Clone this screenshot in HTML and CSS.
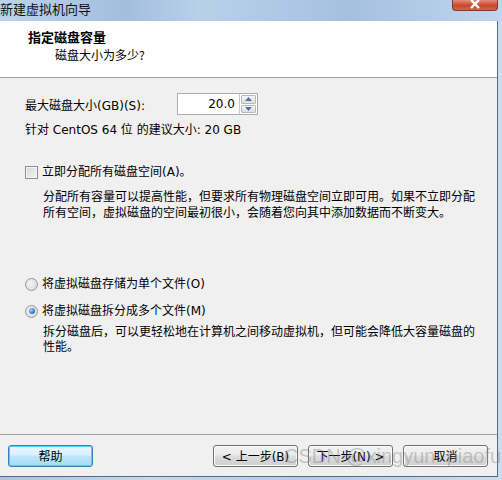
FILE: index.html
```html
<!DOCTYPE html>
<html>
<head>
    <meta charset="utf-8">
    <title>新建虚拟机向导</title>
    <link rel="stylesheet" href="styles.css">
</head>
<body>
    <div class="frame">
        <div class="titlebar">
            <span class="title">新建虚拟机向导</span>
            <div class="close">
                <svg width="14" height="9" viewBox="0 0 14 9"><path d="M3 0 L11 8 M11 0 L3 8" stroke="#fff" stroke-width="2.4"/></svg>
            </div>
        </div>

        <div class="window">
            <div class="header">
                <div class="head-title">指定磁盘容量</div>
                <div class="head-sub">磁盘大小为多少?</div>
            </div>

            <div class="content">
                <div class="size-row">
                    <span>最大磁盘大小(GB)(S):</span>
                    <div class="spin">
                        <div class="spin-input">20.0</div>
                        <div class="spin-btns">
                            <div class="spin-btn"><svg width="7" height="4" viewBox="0 0 7 4"><path d="M0 4 L3.5 0 L7 4 Z" fill="#4d6fb0"/></svg></div>
                            <div class="spin-btn"><svg width="7" height="4" viewBox="0 0 7 4"><path d="M0 0 L3.5 4 L7 0 Z" fill="#4d6fb0"/></svg></div>
                        </div>
                    </div>
                </div>
                <div class="hint">针对 CentOS 64 位 的建议大小: 20 GB</div>

                <div class="option opt-check">
                    <span class="checkbox"></span>
                    <span>立即分配所有磁盘空间(A)。</span>
                </div>
                <p class="note note-first">分配所有容量可以提高性能，但要求所有物理磁盘空间立即可用。如果不立即分配所有空间，虚拟磁盘的空间最初很小，会随着您向其中添加数据而不断变大。</p>

                <div class="option opt-radio1">
                    <span class="radio"></span>
                    <span>将虚拟磁盘存储为单个文件(O)</span>
                </div>
                <div class="option opt-radio2">
                    <span class="radio checked"></span>
                    <span>将虚拟磁盘拆分成多个文件(M)</span>
                </div>
                <p class="note">拆分磁盘后，可以更轻松地在计算机之间移动虚拟机，但可能会降低大容量磁盘的性能。</p>
            </div>

            <div class="footer">
                <button class="btn default">帮助</button>
                <div class="nav">
                    <button class="btn">&lt; 上一步(B)</button>
                    <button class="btn">下一步(N) &gt;</button>
                    <button class="btn">取消</button>
                </div>
                <div class="watermark">CSDN @xingyun_piaofu</div>
            </div>
        </div>
    </div>
</body>
</html>
```

FILE: styles.css
```css
body {
    margin: 0;
    width: 502px;
    height: 480px;
    overflow: hidden;
    font-family: "DejaVu Sans", "Noto Sans CJK SC", sans-serif;
    font-size: 12px;
    color: #000;
}
.frame {
    height: 480px;
    background: linear-gradient(90deg, #a9c4e3 0%, #c5d9ef 30%, #b4cce8 60%, #c9dcf1 100%);
    display: flex;
    flex-direction: column;
}
.titlebar {
    height: 21px;
    display: flex;
    justify-content: space-between;
    align-items: flex-start;
    background: linear-gradient(90deg, #bcd3ec 0%, #a3bedd 25%, #b9d0ea 40%, #a5c0df 70%, #c0d6ee 100%);
}
.title {
    font-family: "Noto Sans CJK SC", sans-serif;
    font-size: 13px;
    line-height: 17px;
    color: #111;
}
.close {
    width: 44px;
    height: 11px;
    margin-right: 4px;
    margin-top: -1px;
    border: 1px solid #7a3a2e;
    border-top: none;
    border-radius: 0 0 4px 4px;
    background: linear-gradient(#e89a8a, #c9462d 60%, #d8654a);
    display: flex;
    align-items: center;
    justify-content: center;
}
.window {
    flex: 1;
    margin-right: 4px;
    margin-bottom: 3px;
    border-right: 1px solid #5a6a7a;
    border-bottom: 1px solid #5a6a7a;
    background: #f0f0f0;
    display: flex;
    flex-direction: column;
    position: relative;
}
.header {
    height: 56px;
    background: #fff;
    border-bottom: 1px solid #a0a0a0;
    font-family: "Noto Sans CJK SC", sans-serif;
}
.head-title {
    font-size: 13px;
    font-weight: bold;
    line-height: 16px;
    padding: 8px 0 0 28px;
}
.head-sub {
    line-height: 16px;
    padding: 2px 0 0 55px;
}
.content {
    flex: 1;
    padding-left: 25px;
    border-bottom: 1px solid #a0a0a0;
}
.size-row {
    display: flex;
    align-items: center;
    margin-top: 15px;
    height: 22px;
}
.spin {
    display: flex;
    margin-left: 32px;
    border: 1px solid #abadb3;
    background: #fff;
    height: 20px;
}
.spin-input {
    width: 57px;
    text-align: right;
    padding-right: 4px;
    line-height: 20px;
}
.spin-btns {
    display: flex;
    flex-direction: column;
    gap: 1px;
    padding: 1px;
    background: #fff;
    border-left: 1px solid #c8c8c8;
}
.spin-btn {
    width: 13px;
    height: 8px;
    border: 1px solid #b8b8b8;
    border-radius: 1px;
    background: linear-gradient(#f6f6f6, #dedede);
    display: flex;
    align-items: center;
    justify-content: center;
}
.hint {
    margin-top: 7px;
    line-height: 16px;
}
.option {
    display: flex;
    align-items: center;
    gap: 4px;
    line-height: 16px;
}
.opt-check { margin-top: 26px; }
.opt-radio1 { margin-top: 56px; }
.opt-radio2 { margin-top: 11px; }
.checkbox {
    width: 11px;
    height: 11px;
    border: 1px solid #8f8f8f;
    background: linear-gradient(135deg, #d8d8d8, #f4f4f4);
    box-shadow: inset 0 0 0 1px #f4f4f4;
}
.radio {
    width: 11px;
    height: 11px;
    border: 1px solid #979797;
    border-radius: 50%;
    background: radial-gradient(circle at 40% 40%, #f4f4f4, #d4d4d4);
    display: flex;
    align-items: center;
    justify-content: center;
}
.radio.checked::after {
    content: "";
    width: 6px;
    height: 6px;
    border-radius: 50%;
    background: radial-gradient(circle at 35% 35%, #9fd6ff, #1b6fc4 70%);
}
.note {
    width: 436px;
    margin: 4px 0 0 18px;
    line-height: 15px;
    font-family: "Noto Sans CJK SC", sans-serif;
}
.note-first {
    margin-top: 8px;
    line-height: 16px;
}
.footer {
    height: 41px;
    display: flex;
    align-items: center;
    justify-content: space-between;
    padding: 0 9px 0 8px;
    position: relative;
}
.nav {
    display: flex;
    gap: 10px;
}
.btn {
    width: 85px;
    height: 22px;
    padding: 0;
    font: inherit;
    font-size: 12px;
    color: #000;
    border: 1px solid #707070;
    border-radius: 3px;
    background: linear-gradient(#f2f2f2 0%, #ebebeb 45%, #dddddd 50%, #cfcfcf 100%);
    box-shadow: inset 0 0 0 1px #fbfbfb;
}
.btn.default {
    border-color: #3c7fb1;
    background: linear-gradient(#eaf6fd 0%, #d9f0fc 45%, #bee6fd 50%, #a7d9f5 100%);
    box-shadow: inset 0 0 0 1px #48d4f3;
}
.watermark {
    position: absolute;
    left: 284px;
    top: 9px;
    white-space: nowrap;
    font-family: "Liberation Sans", sans-serif;
    font-size: 20px;
    line-height: 24px;
    color: rgba(140, 140, 140, 0.45);
    pointer-events: none;
}
```
